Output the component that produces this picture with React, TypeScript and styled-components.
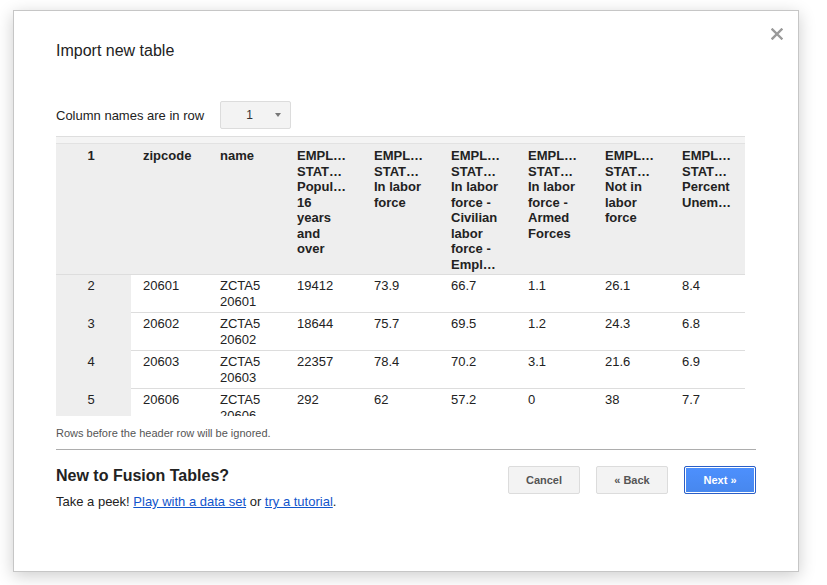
import React from "react";
import styled, { createGlobalStyle } from "styled-components";

const Global = createGlobalStyle`
  html, body { margin: 0; padding: 0; background: #fff; }
  body { font-family: "Liberation Sans", Arial, sans-serif; color: #222; }
`;

const Page = styled.div`
  padding: 10px 0 0 13px;
  height: 585px;
  box-sizing: border-box;
  overflow: hidden;
`;

const Dialog = styled.div`
  position: relative;
  box-sizing: border-box;
  width: 786px;
  height: 562px;
  background: #fff;
  border: 1px solid #c6c6c6;
  box-shadow: 0 4px 16px rgba(0, 0, 0, 0.2);
  padding: 30px 41px 0 42px;
  display: flex;
  flex-direction: column;
`;

const Close = styled.button`
  position: absolute;
  top: 16px;
  right: 14px;
  width: 14px;
  height: 14px;
  padding: 0;
  border: 0;
  background: none;
  display: flex;
  align-items: center;
  justify-content: center;
  cursor: pointer;
`;

const Title = styled.h1`
  margin: 0;
  font-size: 16px;
  line-height: 20px;
  font-weight: normal;
  color: #222;
`;

const HeaderRowPicker = styled.div`
  margin-top: 40px;
  display: flex;
  align-items: center;
  gap: 16px;
  height: 28px;
`;

const Label = styled.span`
  font-size: 13px;
  color: #222;
`;

const Select = styled.div`
  box-sizing: border-box;
  width: 71px;
  height: 28px;
  border: 1px solid #dcdcdc;
  border-radius: 2px;
  background: #f3f3f3;
  display: flex;
  align-items: center;
  justify-content: space-between;
  padding: 0 9px 0 25px;
  font-size: 12px;
  font-weight: normal;
  color: #333;
`;

const Arrow = styled.span`
  width: 0;
  height: 0;
  border-left: 3.5px solid transparent;
  border-right: 3.5px solid transparent;
  border-top: 4px solid #777;
`;

const Preview = styled.div`
  margin-top: 7px;
  width: 689px;
  height: 280px;
  overflow: hidden;
`;

const TopStrip = styled.div`
  height: 6px;
  width: 689px;
  background: #f4f4f4;
  border-top: 1px solid #dedede;
  border-bottom: 1px solid #e2e2e2;
`;

const Table = styled.table`
  border-collapse: collapse;
  table-layout: fixed;
  width: 691px;
  font-size: 13px;
  line-height: 15.5px;
`;

const HeadCell = styled.th<{ $first?: boolean }>`
  background: #eeeeee;
  font-weight: bold;
  color: #222;
  vertical-align: top;
  text-align: ${(p) => (p.$first ? "center" : "left")};
  padding: 4px ${(p) => (p.$first ? "5px" : "6px")} 2px ${(p) => (p.$first ? "0" : "12px")};
  border-bottom: 1px solid #dddddd;
  white-space: pre-line;
  overflow: hidden;
`;

const Cell = styled.td<{ $first?: boolean }>`
  background: ${(p) => (p.$first ? "#eeeeee" : "#fff")};
  color: #222;
  vertical-align: top;
  text-align: ${(p) => (p.$first ? "center" : "left")};
  padding: 3px ${(p) => (p.$first ? "5px" : "6px")} 3px ${(p) => (p.$first ? "0" : "12px")};
  border-bottom: 1px solid ${(p) => (p.$first ? "#eeeeee" : "#dddddd")};
  white-space: pre-line;
  height: 31px;
  overflow: hidden;
`;

const Note = styled.div`
  margin-top: 10px;
  font-size: 11px;
  line-height: 14px;
  color: #555;
`;

const Rule = styled.div`
  margin-top: 9px;
  width: 700px;
  border-top: 1px solid #adadad;
`;

const Footer = styled.div`
  margin-top: 16px;
  width: 700px;
  display: flex;
  justify-content: space-between;
  align-items: flex-start;
`;

const Promo = styled.div`
  display: flex;
  flex-direction: column;
  gap: 8px;
`;

const PromoTitle = styled.h2`
  margin: 0;
  font-size: 16px;
  line-height: 20px;
  font-weight: bold;
  color: #222;
`;

const PromoText = styled.p`
  margin: 0;
  font-size: 13px;
  line-height: 16px;
  color: #222;
`;

const Link = styled.a`
  color: #1155cc;
  text-decoration: underline;
`;

const Buttons = styled.div`
  display: flex;
  gap: 16px;
`;

const Button = styled.button<{ $primary?: boolean }>`
  box-sizing: border-box;
  width: 72px;
  height: 28px;
  border-radius: 2px;
  font-family: "Liberation Sans", Arial, sans-serif;
  font-size: 11px;
  font-weight: bold;
  cursor: pointer;
  border: 1px solid ${(p) => (p.$primary ? "#2b5fc7" : "#dcdcdc")};
  background: ${(p) => (p.$primary ? "linear-gradient(#4d90fe, #4787ed)" : "#f3f3f3")};
  color: ${(p) => (p.$primary ? "#fff" : "#555")};
  box-shadow: ${(p) => (p.$primary ? "inset 0 0 0 1px #ffffff" : "none")};
`;

const headers: string[] = [
  "1",
  "zipcode",
  "name",
  "EMPL…\nSTAT…\nPopul…\n16\nyears\nand\nover",
  "EMPL…\nSTAT…\nIn labor\nforce",
  "EMPL…\nSTAT…\nIn labor\nforce -\nCivilian\nlabor\nforce -\nEmpl…",
  "EMPL…\nSTAT…\nIn labor\nforce -\nArmed\nForces",
  "EMPL…\nSTAT…\nNot in\nlabor\nforce",
  "EMPL…\nSTAT…\nPercent\nUnem…",
];

const rows: string[][] = [
  ["2", "20601", "ZCTA5\n20601", "19412", "73.9", "66.7", "1.1", "26.1", "8.4"],
  ["3", "20602", "ZCTA5\n20602", "18644", "75.7", "69.5", "1.2", "24.3", "6.8"],
  ["4", "20603", "ZCTA5\n20603", "22357", "78.4", "70.2", "3.1", "21.6", "6.9"],
  ["5", "20606", "ZCTA5\n20606", "292", "62", "57.2", "0", "38", "7.7"],
];

const widths = [75, 77, 77, 77, 77, 77, 77, 77, 77];

export default function App() {
  return (
    <>
      <Global />
      <Page>
        <Dialog>
          <Close aria-label="Close">
            <svg width="12" height="12" viewBox="0 0 12 12">
              <path d="M1.5 1.5 L10.5 10.5 M10.5 1.5 L1.5 10.5" stroke="#9a9a9a" strokeWidth="2.4" strokeLinecap="square" />
            </svg>
          </Close>
          <Title>Import new table</Title>
          <HeaderRowPicker>
            <Label>Column names are in row</Label>
            <Select>
              <span>1</span>
              <Arrow />
            </Select>
          </HeaderRowPicker>
          <Preview>
            <TopStrip />
            <Table>
              <colgroup>
                {widths.map((w, i) => (
                  <col key={i} style={{ width: w }} />
                ))}
              </colgroup>
              <thead>
                <tr>
                  {headers.map((h, i) => (
                    <HeadCell key={i} $first={i === 0}>
                      {h}
                    </HeadCell>
                  ))}
                </tr>
              </thead>
              <tbody>
                {rows.map((r, ri) => (
                  <tr key={ri}>
                    {r.map((c, ci) => (
                      <Cell key={ci} $first={ci === 0}>
                        {c}
                      </Cell>
                    ))}
                  </tr>
                ))}
              </tbody>
            </Table>
          </Preview>
          <Note>Rows before the header row will be ignored.</Note>
          <Rule />
          <Footer>
            <Promo>
              <PromoTitle>New to Fusion Tables?</PromoTitle>
              <PromoText>
                Take a peek! <Link href="#">Play with a data set</Link> or{" "}
                <Link href="#">try a tutorial</Link>.
              </PromoText>
            </Promo>
            <Buttons>
              <Button>Cancel</Button>
              <Button>« Back</Button>
              <Button $primary>Next »</Button>
            </Buttons>
          </Footer>
        </Dialog>
      </Page>
    </>
  );
}
